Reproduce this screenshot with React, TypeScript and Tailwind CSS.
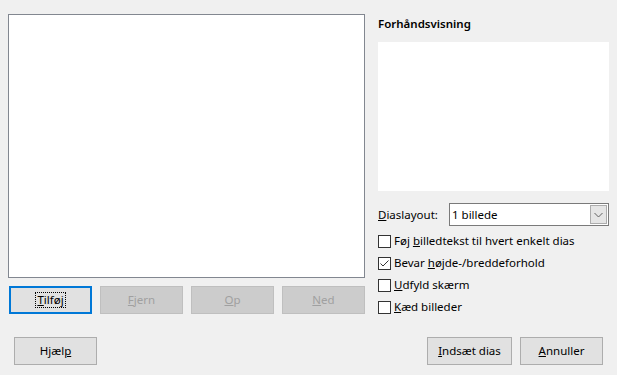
import React from 'react';

const font = { fontFamily: '"Noto Sans", "Liberation Sans", sans-serif' };

const Btn = ({ children, disabled, focused, w = 'w-[83px]' }: { children: React.ReactNode; disabled?: boolean; focused?: boolean; w?: string }) => {
  if (focused) {
    return (
      <button className={`${w} h-[28px] border-2 border-[#0078d7] bg-[#e1e1e1] flex items-center justify-center text-[11.5px] text-black`}>
        <span className="outline outline-1 outline-dotted outline-black px-[1px] leading-[14px]">{children}</span>
      </button>
    );
  }
  return (
    <button
      className={`${w} h-[28px] border flex items-center justify-center text-[11.5px] ${
        disabled ? 'border-[#bfbfbf] bg-[#cccccc] text-[#a0a0a0]' : 'border-[#adadad] bg-[#e1e1e1] text-black'
      }`}
    >
      {children}
    </button>
  );
};

const Check = ({ checked, children }: { checked?: boolean; children: React.ReactNode }) => (
  <label className="flex items-center h-[22px] text-[11.5px] text-black">
    <span className="w-[13px] h-[13px] border border-[#333333] bg-white flex items-center justify-center mr-[3px]">
      {checked && (
        <svg width="11" height="11" viewBox="0 0 11 11">
          <path d="M1.5 5.5 L4 8 L9.5 2.5" fill="none" stroke="#333" strokeWidth="1" />
        </svg>
      )}
    </span>
    <span>{children}</span>
  </label>
);

export default function App() {
  return (
    <div className="w-[617px] h-[375px] bg-[#f0f0f0] flex flex-col select-none" style={font}>
      <div className="flex pt-[14px] pl-[8px]">
        <div className="w-[357px] flex flex-col">
          <div className="h-[264px] border border-[#828790] bg-white" />
          <div className="flex gap-[8px] mt-[8px] pl-[1px]">
            <Btn focused><u>T</u>ilføj</Btn>
            <Btn disabled><u>F</u>jern</Btn>
            <Btn disabled><u>O</u>p</Btn>
            <Btn disabled><u>N</u>ed</Btn>
          </div>
        </div>
        <div className="ml-[13px] w-[231px] flex flex-col">
          <div className="h-[20px] mb-[8px] flex items-center text-[11.5px] font-semibold text-black">Forhåndsvisning</div>
          <div className="h-[149px] bg-white" />
          <div className="flex items-center mt-[12px] h-[23px]">
            <span className="w-[71px] text-[11.5px] text-black"><u>D</u>iaslayout:</span>
            <div className="flex-1 h-[23px] border border-[#7a7a7a] bg-white flex items-center">
              <span className="flex-1 pl-[2px] text-[11.5px] text-black">1 billede</span>
              <span className="w-[17px] h-[19px] mr-[1px] bg-[#e5e5e5] border border-[#acacac] flex items-center justify-center">
                <svg width="9" height="6" viewBox="0 0 9 6">
                  <path d="M0.5 1 L4.5 5 L8.5 1" fill="none" stroke="#606060" strokeWidth="1" />
                </svg>
              </span>
            </div>
          </div>
          <div className="flex flex-col mt-[4px]">
            <Check>Føj <u>b</u>illedtekst til hvert enkelt dias</Check>
            <Check checked>Bevar <u>h</u>øjde-/breddeforhold</Check>
            <Check><u>U</u>dfyld skærm</Check>
            <Check><u>K</u>æd billeder</Check>
          </div>
        </div>
      </div>
      <div className="flex mt-[19px] px-[14px]">
        <Btn>Hjæl<u>p</u></Btn>
        <div className="flex-1" />
        <div className="flex gap-[8px]">
          <Btn w="w-[85px]"><u>I</u>ndsæt dias</Btn>
          <Btn><u>A</u>nnuller</Btn>
        </div>
      </div>
    </div>
  );
}
